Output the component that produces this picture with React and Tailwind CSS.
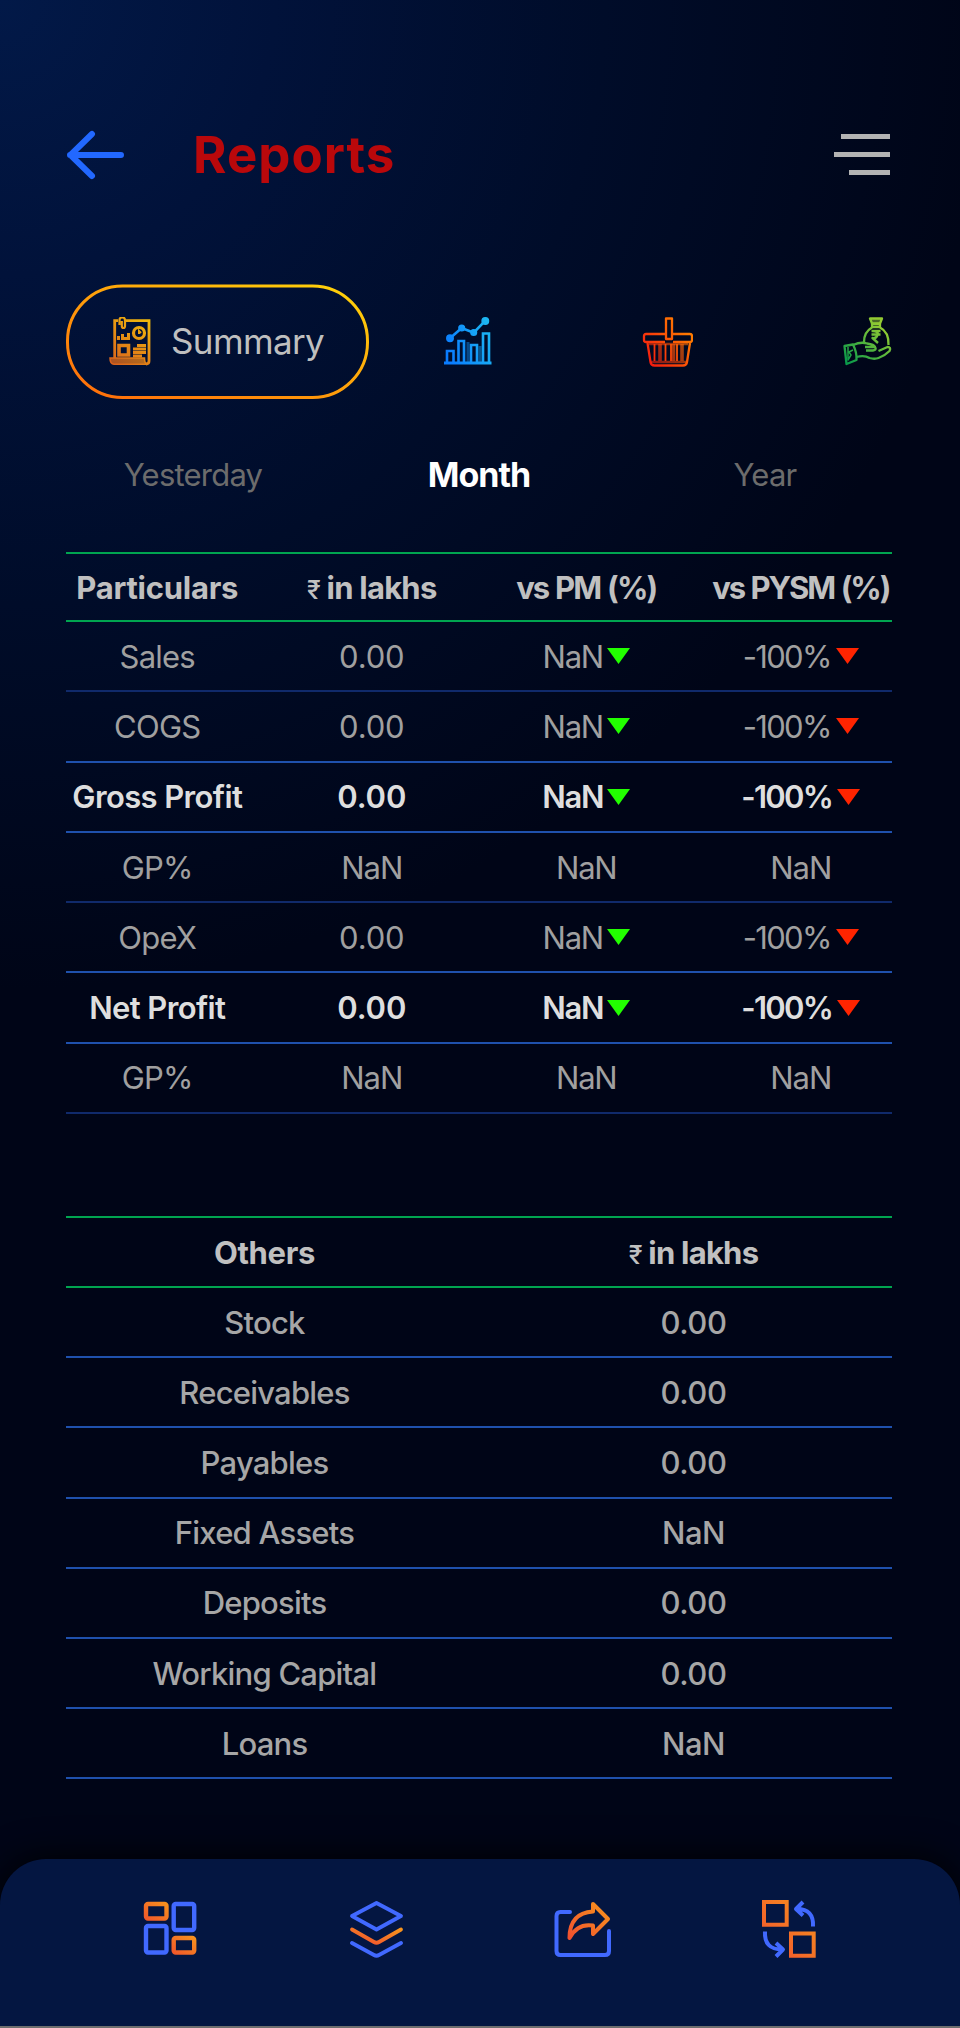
import React, { useState } from "react";
import clsx from "clsx";

const profitRows = [
  { name: "Sales", value: "0.00", pm: "NaN", pysm: "-100%", trend: true },
  { name: "COGS", value: "0.00", pm: "NaN", pysm: "-100%", trend: true, brightLine: true },
  { name: "Gross Profit", value: "0.00", pm: "NaN", pysm: "-100%", trend: true, bold: true, brightLine: true },
  { name: "GP%", value: "NaN", pm: "NaN", pysm: "NaN" },
  { name: "OpeX", value: "0.00", pm: "NaN", pysm: "-100%", trend: true, brightLine: true },
  { name: "Net Profit", value: "0.00", pm: "NaN", pysm: "-100%", trend: true, bold: true, brightLine: true },
  { name: "GP%", value: "NaN", pm: "NaN", pysm: "NaN" },
];

const otherRows = [
  { name: "Stock", value: "0.00" },
  { name: "Receivables", value: "0.00" },
  { name: "Payables", value: "0.00" },
  { name: "Fixed Assets", value: "NaN" },
  { name: "Deposits", value: "0.00" },
  { name: "Working Capital", value: "0.00" },
  { name: "Loans", value: "NaN" },
];

const Gradient = ({ id, from, to }) => (
  <linearGradient id={id} x1="0" y1="1" x2="1" y2="0">
    <stop offset="0" stopColor={from} />
    <stop offset="1" stopColor={to} />
  </linearGradient>
);

const BackArrow = () => (
  <svg width="58" height="50" viewBox="0 0 58 50" fill="none" stroke="#2268ff" strokeWidth="6" strokeLinecap="round" strokeLinejoin="round">
    <path d="M55 25H4M26 4L4.500 25 26 46" />
  </svg>
);

const SummaryIcon = () => (
  <svg width="42" height="49" viewBox="0 0 42 49" fill="none" stroke="url(#summary)">
    <defs>
      <linearGradient id="summary" gradientUnits="userSpaceOnUse" x1="4" y1="48" x2="38" y2="0">
        <stop offset="0" stopColor="#d9601c" />
        <stop offset="1" stopColor="#f2bd0c" />
      </linearGradient>
    </defs>
    <path d="M9 3.700H5.700V41M17 3.700h23V44q0 3-3 3" strokeWidth="2.800" />
    <path d="M1 41h34.500q0 6 3 6.200H5Q1 47 1 41z" fill="url(#summary)" fillOpacity=".8" strokeWidth="1.500" />
    <path d="M10.500 8V3q0-2.500 2.700-2.500T16 3v6q0 2-1.600 2t-1.600-2V4" strokeWidth="2.200" />
    <circle cx="30" cy="16" r="5.500" strokeWidth="3.200" />
    <path d="M30 17v-3l2 2" strokeWidth="2" />
    <path d="M9.500 23v-4M13.500 23v-6M19.500 23v-7M16.500 23v-3" strokeWidth="3" />
    <path d="M10 28.500h9.500V38H10z" strokeWidth="3.600" />
    <path d="M28 28.500h9M24 32h13M24 35.500h13M24 39h9" strokeWidth="2.900" />
  </svg>
);

const ChartIcon = () => (
  <svg width="48" height="49" viewBox="0 0 48 49" fill="none" stroke="url(#chart)" strokeWidth="2.600">
    <defs>
      <linearGradient id="chart" gradientUnits="userSpaceOnUse" x1="2" y1="30" x2="46" y2="14">
        <stop offset="0" stopColor="#0a7cff" />
        <stop offset="1" stopColor="#1cb6f2" />
      </linearGradient>
    </defs>
    <path d="M0 46h47.500" strokeWidth="3.200" />
    <path d="M3 46V34h6.500v12M14.500 46V24H20v22M27 46V28h6v18M39 46V16.500h6V46" />
    <path d="M24 25v20M36 29v16" strokeOpacity=".45" strokeWidth="3" />
    <path d="M6 21.300L17.700 11l12 4.700 11.600-12" />
    <g fill="url(#chart)" strokeWidth="1.500">
      <circle cx="6" cy="21.300" r="3.200" />
      <circle cx="17.700" cy="11" r="2.800" />
      <circle cx="29.700" cy="15.500" r="2.800" />
      <circle cx="41.300" cy="4" r="3.200" />
    </g>
  </svg>
);

const BasketIcon = () => (
  <svg width="51" height="50" viewBox="0 0 51 50" fill="none" stroke="url(#basket)" strokeWidth="2.300" strokeLinejoin="round">
    <defs>
      <linearGradient id="basket" gradientUnits="userSpaceOnUse" x1="4" y1="44" x2="44" y2="14">
        <stop offset="0" stopColor="#f5180f" />
        <stop offset="1" stopColor="#ff7a00" />
      </linearGradient>
    </defs>
    <path d="M23 17H4q-2 0-2 2v4q0 2 2 2h19M31 17h17q2 0 2 2v4q0 2-2 2H31" />
    <path d="M24 1.500h6V22h-6z" />
    <path d="M5.500 26l3 19q.5 3.500 4 3.500H41q3.500 0 4-3.500l3-19" />
    <path d="M9 45h35M7 27h39" strokeOpacity=".6" strokeWidth="2.400" />
    <path d="M12.500 27v17M23.500 27v17M29 27v17M35 27v17" strokeWidth="1.800" />
    <path d="M18 27v17M31.500 27v17M40 27v17" strokeOpacity=".65" strokeWidth="3.600" />
  </svg>
);

const MoneyIcon = () => (
  <svg width="49" height="49" viewBox="0 0 49 49" fill="none" stroke="url(#money)" strokeWidth="2.300" strokeLinejoin="round">
    <defs>
      <linearGradient id="money" gradientUnits="userSpaceOnUse" x1="3" y1="44" x2="36" y2="6">
        <stop offset="0" stopColor="#0a9a4a" />
        <stop offset="1" stopColor="#93cb32" />
      </linearGradient>
    </defs>
    <path d="M27 1.500h12l-2 5H29z" fill="url(#money)" fillOpacity=".5" />
    <path d="M29 7h8v3h-8z" />
    <path d="M29 10.500Q21 15 21 25M37 10.500Q46 15 45.500 28" />
    <path d="M28.500 14h9M28.500 17.500h9M29 14q7 0 5.500 4t-5 3l5.500 5" strokeWidth="2.400" />
    <path d="M1.500 29l8.500-1.500q4 8 3.500 15.500L3.500 47z" />
    <path d="M5 30v13l3-5-2-3 4-2" strokeWidth="1.500" />
    <path d="M10 28q8-3.500 14-1.500 7 1 8 3.500H22M32 30q2 3-2 3.500h-7M13.500 40q8-2 13 1 5 1.500 9 0 6-2 11-7 2-4-2-4l-9 4" />
  </svg>
);

const DashboardIcon = () => (
  <svg width="56" height="56" viewBox="0 0 56 56" fill="none" stroke="#4169ff" strokeWidth="4.400">
    <defs>
      <Gradient id="dash" from="#f1592a" to="#f7901e" />
    </defs>
    <rect x="4" y="4" width="20.500" height="14.500" rx="2" stroke="url(#dash)" />
    <rect x="31.700" y="4" width="20.500" height="26" rx="2" />
    <rect x="4" y="26" width="20.500" height="26.500" rx="2" />
    <rect x="31.700" y="38" width="20.500" height="14.500" rx="2" stroke="url(#dash)" />
  </svg>
);

const LayersIcon = () => (
  <svg width="56" height="58" viewBox="0 0 56 58" fill="none" stroke="#4169ff" strokeWidth="3.800" strokeLinecap="round" strokeLinejoin="round">
    <defs>
      <Gradient id="layers" from="#f1502f" to="#f7941d" />
    </defs>
    <path d="M27.500 3L52 16 27.500 29.500 3 16z" />
    <path d="M3 29.500l22 12.500q2.500 1.500 5 0L52 29.500" stroke="url(#layers)" />
    <path d="M3 43l22 12q2.500 1.500 5 0l22-12" />
  </svg>
);

const ShareIcon = () => (
  <svg width="58" height="58" viewBox="0 0 58 58" fill="none" strokeWidth="4">
    <defs>
      <Gradient id="share" from="#f1502f" to="#f7941d" />
    </defs>
    <path d="M16 12H6.500q-4 0-4 4v35q0 4 4 4H51q4 0 4-4V31" stroke="#4169ff" strokeLinecap="round" />
    <path d="M15.500 38Q15.500 13 39 11.500V4l15 15-15 15v-8.500Q23.500 23 15.500 38z" stroke="url(#share)" strokeLinejoin="round" />
  </svg>
);

const SwapIcon = () => (
  <svg width="56" height="58" viewBox="0 0 56 58" fill="none" stroke="#4169ff" strokeWidth="4">
    <defs>
      <Gradient id="swap" from="#f1502f" to="#f7941d" />
    </defs>
    <path d="M2 2h22.700v22.700H2zM29 33.500h22.700v22.300H29z" stroke="url(#swap)" />
    <path d="M51 26.500Q52 9 35 9M41 2l-7 7 7 6.500" strokeLinejoin="round" />
    <path d="M3 31.500Q2 49.500 20 49.500M14 43l7 6.500-7 7" strokeLinejoin="round" />
  </svg>
);

const Triangle = ({ className }) => (
  <svg width="23" height="16" viewBox="0 0 23 16" className={className}>
    <path d="M0 0h23L11.500 16z" fill="currentColor" />
  </svg>
);

const Rupees = () => (
  <span>
    <span className="text-[25px] font-medium">₹</span> in lakhs
  </span>
);

export default function App() {
  const [tab, setTab] = useState("Month");

  return (
    <div className="flex h-[2028px] w-[960px] flex-col overflow-hidden bg-[#000517] bg-[radial-gradient(circle_1100px_at_0_0,#021948_0%,#01123a_25%,#000c29_55%,#000517_90%)] font-['Inter',sans-serif] text-[31px] leading-none tracking-[-0.025em] text-[#a0a0a0]">
      <main className="flex flex-col pr-[68px] pl-[66px] pt-[120px]">
        <header className="flex h-[69px] items-center">
          <button>
            <BackArrow />
          </button>
          <h1 className="ml-[69px] text-[51px] font-bold tracking-[0.02em] text-[#ba080b]">Reports</h1>
          <button className="mr-[2px] ml-auto flex flex-col items-end gap-[13px]">
            <span className="h-[5px] w-[49px] bg-[#b3b3b3]" />
            <span className="h-[5px] w-[56px] bg-[#b3b3b3]" />
            <span className="h-[5px] w-[41px] bg-[#b3b3b3]" />
          </button>
        </header>

        <div className="mt-[95px] flex h-[115px] items-center">
          <button className="relative flex h-full w-[303px] items-center pl-[43px]">
            <svg width="303" height="115" viewBox="0 0 303 115" fill="none" className="absolute inset-0">
              <defs>
                <Gradient id="pill" from="#ff6a0a" to="#ffd60a" />
              </defs>
              <rect x="1.500" y="2" width="300" height="111.500" rx="55" stroke="url(#pill)" strokeWidth="3" />
            </svg>
            <SummaryIcon />
            <span className="ml-[20px] text-[35px] tracking-[-0.018em] text-[#bfbfbf]">Summary</span>
          </button>
          <div className="flex flex-1 items-center justify-between pl-[75px]">
            <ChartIcon />
            <BasketIcon />
            <MoneyIcon />
          </div>
        </div>

        <div className="-mx-4 mt-[52px] mb-[55px] grid h-[46px] grid-cols-3">
          {["Yesterday", "Month", "Year"].map((item) => (
            <button
              key={item}
              onClick={() => setTab(item)}
              className={clsx(
                "whitespace-nowrap",
                tab === item ? "pt-[2px] text-[34px] font-bold tracking-[-0.03em] text-white" : "text-[#6c6c6c]"
              )}
            >
              {item}
            </button>
          ))}
        </div>

        <section className="border-t-2 border-[#00a550]">
          <div className="h-[68px] border-b-2 border-[#00a550]">
            <div className="-mx-4 grid h-full grid-cols-4 place-items-center font-bold whitespace-nowrap text-[#c0c0c0]">
              <span className="tracking-[-0.008em]">Particulars</span>
              <Rupees />
              <span className="tracking-[-0.06em] [word-spacing:0.04em]">vs PM (%)</span>
              <span className="tracking-[-0.067em] [word-spacing:0.04em]">vs PYSM (%)</span>
            </div>
          </div>
          {profitRows.map((row, i) => (
            <div
              key={i}
              className={clsx("h-[70.3px] border-b-2", row.brightLine ? "border-[#1f51ad]" : "border-[#102a6b]")}
            >
              <div
                className={clsx(
                  "-mx-4 grid h-full grid-cols-4 place-items-center whitespace-nowrap",
                  row.bold && "font-semibold text-[#dedede]"
                )}
              >
                <span className={clsx(row.bold && "tracking-[-0.02em]")}>{row.name}</span>
                <span className={clsx(row.value === "NaN" ? "tracking-[-0.035em]" : "tracking-[-0.005em]")}>
                  {row.value}
                </span>
                <span className="flex items-center gap-[4px] tracking-[-0.04em]">
                  {row.pm}
                  {row.trend && <Triangle className="text-[#22ff00]" />}
                </span>
                <span
                  className={clsx(
                    "flex items-center gap-[5px]",
                    row.trend ? "tracking-[-0.055em]" : "tracking-[-0.035em]"
                  )}
                >
                  {row.pysm}
                  {row.trend && <Triangle className="text-[#ff2400]" />}
                </span>
              </div>
            </div>
          ))}
        </section>

        <section className="mt-[102px] border-t-2 border-[#00a550]">
          <div className="h-[70px] border-b-2 border-[#00a550]">
            <div className="-mx-4 grid h-full grid-cols-2 place-items-center font-bold text-[#c0c0c0]">
              <span className="tracking-[-0.01em]">Others</span>
              <Rupees />
            </div>
          </div>
          {otherRows.map((row) => (
            <div key={row.name} className="h-[70.2px] border-b-2 border-[#1f51ad]">
              <div className="-mx-4 grid h-full grid-cols-2 place-items-center font-medium text-[#a6a6a6]">
                <span>{row.name}</span>
                <span className="tracking-[-0.015em]">{row.value}</span>
              </div>
            </div>
          ))}
        </section>
      </main>

      <nav className="mt-auto grid h-[167px] shrink-0 grid-cols-4 justify-items-center rounded-t-[46px] bg-[#041641] px-[67px] pt-[41px] shadow-[0_0_36px_#000000]">
        <DashboardIcon />
        <LayersIcon />
        <ShareIcon />
        <SwapIcon />
      </nav>
      <div className="h-[2px] shrink-0 bg-[#6e6e6e]" />
    </div>
  );
}
